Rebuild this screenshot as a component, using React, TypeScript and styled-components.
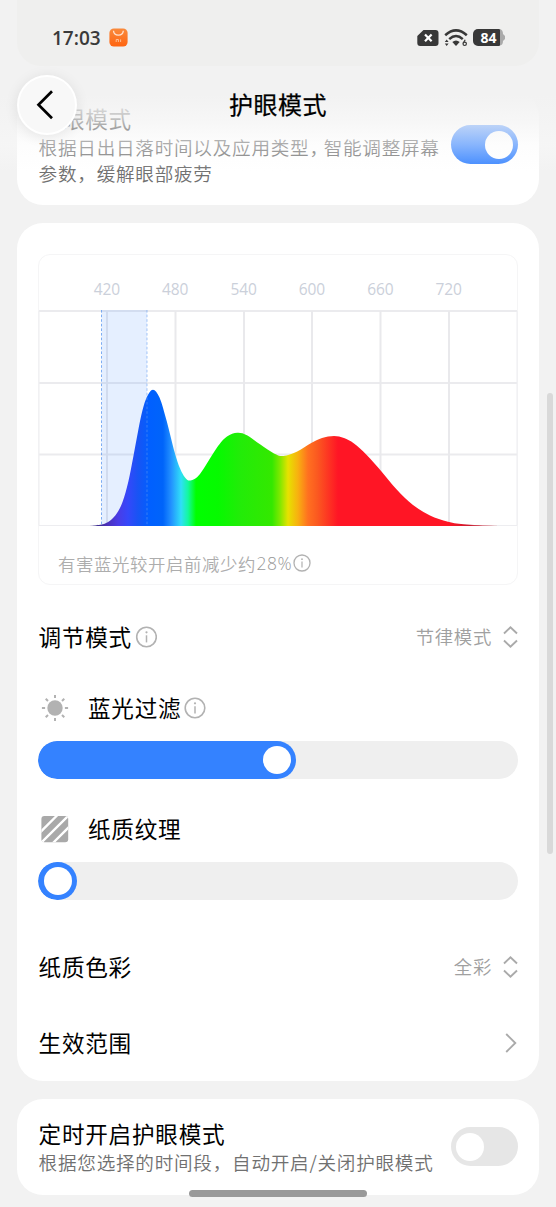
import React from 'react';
import styled, { createGlobalStyle } from 'styled-components';

const GlobalStyle = createGlobalStyle`
  * { box-sizing: border-box; }
  body {
    margin: 0;
    background: #f2f2f2;
    font-family: "Noto Sans CJK SC", "Noto Sans", sans-serif;
    color: #000;
    overflow: hidden;
  }
  svg { display: block; flex: none; }
`;

const Screen = styled.main`
  position: relative;
  width: 556px;
  height: 1207px;
  overflow: hidden;
  background: #f2f2f2;
  padding: 91px 17px 0;
  display: flex;
  flex-direction: column;
  gap: 18px;
`;

const Card = styled.section<{ $height: number }>`
  flex: none;
  height: ${(p) => p.$height}px;
  border-radius: 26px;
  background: #fff;
  padding: 0 21px;
`;

const SwitchCard = styled(Card)<{ $top: number }>`
  display: flex;
  justify-content: space-between;
  align-items: flex-start;
  padding-top: ${(p) => p.$top}px;
`;

const SwitchText = styled.div`
  display: flex;
  flex-direction: column;
  white-space: nowrap;
  padding-left: 0.6px;
`;

const Label = styled.span`
  font-size: 22.6px;
  line-height: 30px;
  letter-spacing: 0.75px;
  white-space: nowrap;
`;

const Hint = styled.span`
  font-size: 18.6px;
  line-height: 26px;
  letter-spacing: 0.75px;
  font-weight: 350;
  color: #707070;
`;

const TightComma = styled.span`
  letter-spacing: -4.4px;
`;

const Toggle = styled.div<{ $on?: boolean; $top: number }>`
  flex: none;
  width: 67.5px;
  height: 39px;
  margin-top: ${(p) => p.$top}px;
  padding: 0 5.5px;
  border-radius: 20px;
  display: flex;
  align-items: center;
  justify-content: ${(p) => (p.$on ? 'flex-end' : 'flex-start')};
  background: ${(p) => (p.$on ? '#3482ff' : '#e6e6e6')};
`;

const Knob = styled.div`
  flex: none;
  width: 28px;
  height: 28px;
  border-radius: 50%;
  background: #fff;
`;

const ChartCard = styled.div`
  height: 331px;
  margin: 31px 0 16px;
  border: 1px solid #f5f5f6;
  border-radius: 12px;
  display: flex;
  flex-direction: column;
`;

const ChartScale = styled.div`
  display: grid;
  grid-template-columns: repeat(6, 68.4px);
  padding-left: 33.6px;
  height: 55px;
  align-items: center;
  text-align: center;
  padding-top: 13px;
  font-family: "Open Sans", "Noto Sans", sans-serif;
  font-size: 15.5px;
  letter-spacing: -0.1px;
  color: #cbd0da;
`;

const Plot = styled.svg`
  margin-left: -1px;
`;

const ChartNote = styled.div`
  display: flex;
  align-items: center;
  height: 26px;
  margin: 22px 0 0 19px;
  font-size: 17.4px;
  letter-spacing: 0.6px;
  font-weight: 350;
  color: #adadad;
`;

const NoteValue = styled.span`
  font-family: "Open Sans", "Noto Sans", sans-serif;
  font-size: 17.5px;
  font-weight: 300;
  color: #999;
  letter-spacing: 0.5px;
  margin: 0 0.5px;
`;

const Row = styled.div<{ $height: number; $gap?: number }>`
  display: flex;
  align-items: center;
  height: ${(p) => p.$height}px;
  margin-top: ${(p) => p.$gap ?? 0}px;
  padding-left: 0.6px;
`;

const SliderHead = styled(Row)<{ $shift: number }>`
  padding-top: ${(p) => p.$shift}px;
`;

const HeadIcon = styled.div`
  width: 49.4px;
  padding-left: 2px;
  flex: none;
`;

const RowEnd = styled.div`
  margin-left: auto;
  display: flex;
  align-items: center;
  gap: 11px;
  font-size: 18.4px;
  letter-spacing: 0.7px;
  font-weight: 350;
  color: #a0a0a0;
`;

const RowValue = styled.span`
  margin-top: -2px;
`;

const Track = styled.div`
  height: 38px;
  border-radius: 19px;
  background: #efefef;
  overflow: hidden;
`;

const Fill = styled.div`
  height: 38px;
  border-radius: 19px;
  padding: 0 5px;
  background: #3482ff;
  display: flex;
  align-items: center;
  justify-content: flex-end;
`;

const TopFade = styled.div`
  position: absolute;
  inset: 0 0 auto 0;
  height: 175px;
  background: linear-gradient(
    rgba(242, 242, 242, 1) 95px,
    rgba(244, 244, 244, 0.78) 120px,
    rgba(250, 250, 250, 0.42) 145px,
    rgba(255, 255, 255, 0) 172px
  );
`;

const StatusBar = styled.header`
  position: absolute;
  top: 0;
  left: 17px;
  width: 522px;
  height: 66px;
  padding: 9px 33px 0 35px;
  border-radius: 0 0 24px 24px;
  background: #efefee;
  display: flex;
  align-items: center;
`;

const Clock = styled.span`
  font-family: "Open Sans", "Noto Sans", sans-serif;
  font-size: 19px;
  font-weight: 600;
  letter-spacing: 0;
  color: #3a3a3a;
  width: 57px;
`;

const StatusIcons = styled.div`
  margin-left: auto;
  display: flex;
  align-items: center;
  gap: 5px;
`;

const NavBar = styled.nav`
  position: absolute;
  top: 75px;
  left: 17px;
  right: 17px;
  height: 60px;
  display: grid;
  grid-template-columns: 60px 1fr 60px;
  align-items: center;
`;

const BackButton = styled.button`
  width: 60px;
  height: 60px;
  padding: 0;
  border: 2px solid #fff;
  border-radius: 50%;
  background: #f8f8f8;
  box-shadow: 0 2px 14px rgba(0, 0, 0, 0.09);
  display: flex;
  align-items: center;
  justify-content: center;
`;

const PageTitle = styled.h1`
  margin: -2px 0 0;
  text-align: center;
  font-size: 24px;
  font-weight: 400;
  letter-spacing: 0.5px;
  line-height: 36px;
  -webkit-text-stroke: 0.25px #000;
`;

const ScrollThumb = styled.div`
  position: absolute;
  left: 547px;
  top: 393px;
  width: 6px;
  height: 461px;
  border-radius: 3px;
  background: #d9d9d9;
`;

const HomeBar = styled.div`
  position: absolute;
  left: 189px;
  top: 1190px;
  width: 178px;
  height: 7px;
  border-radius: 4px;
  background: #999;
`;

const InfoIcon = ({ size, left = 0 }: { size: number; left?: number }) => (
  <svg width={size + left} height={size} viewBox={`${-left} 0 ${size + left} ${size}`} fill="none">
    <g transform={`scale(${size / 22})`}>
      <circle cx="11" cy="11" r="9.8" stroke="#b2b2b2" strokeWidth="1.6" />
      <circle cx="11" cy="6.3" r="1.1" fill="#b2b2b2" />
      <path d="M11 9.3V16.4" stroke="#b2b2b2" strokeWidth="1.5" />
    </g>
  </svg>
);

const UpDownIcon = () => (
  <svg width="15" height="24" viewBox="0 0 15 24" fill="none" stroke="#aaa" strokeWidth="1.9">
    <path d="M1 8.5L7.5 2.3L14 8.5M1 15.5L7.5 21.7L14 15.5" />
  </svg>
);

const ChevronIcon = () => (
  <svg width="15" height="22" viewBox="0 0 15 22" fill="none" stroke="#aaa" strokeWidth="1.9">
    <path d="M3.2 2L12.3 11L3.2 20" />
  </svg>
);

const SunIcon = () => (
  <svg width="28" height="28" viewBox="0 0 28 28">
    <circle cx="14" cy="14" r="7.7" fill="#b2b2b2" />
    {[0, 45, 90, 135, 180, 225, 270, 315].map((a) => (
      <path key={a} d="M14 .9V4.1" stroke="#b2b2b2" strokeWidth="2" transform={`rotate(${a} 14 14)`} />
    ))}
  </svg>
);

const PaperIcon = () => (
  <svg width="28" height="28" viewBox="0 0 28 28">
    <defs>
      <clipPath id="sheet"><rect x=".4" y="1" width="26.8" height="26.2" rx="3" /></clipPath>
    </defs>
    <g clipPath="url(#sheet)">
      <rect width="28" height="28" fill="#a9a9a9" />
      <path d="M-2 18.5L18.5-2M-2 30L30-2M10 30L30 10" stroke="#fff" strokeWidth="2.3" />
    </g>
  </svg>
);

const StoreIcon = () => (
  <svg width="19" height="19" viewBox="0 0 19 19">
    <defs>
      <linearGradient id="store" x2="0" y2="1">
        <stop stopColor="#f98a3c" />
        <stop offset="1" stopColor="#ff6410" />
      </linearGradient>
    </defs>
    <rect x=".4" y=".4" width="18.2" height="18.2" rx="4.5" fill="url(#store)" />
    <path d="M4.5 2.8C5 8.6 13.8 8.6 14.3 2.8" fill="none" stroke="#ffe3d0" strokeWidth="1.3" />
    <path d="M7.2 14V11.5H9.4V14M11.6 11.4V14" fill="none" stroke="#ffc7a0" strokeWidth=".9" />
  </svg>
);

const SimIcon = () => (
  <svg width="22" height="18" viewBox="0 0 22 18">
    <path d="M6.5 1H18.5Q21.5 1 21.5 4V14Q21.5 17 18.5 17H3.2Q.3 17 .3 14V7Z" fill="#383838" />
    <path d="M8 5.5L14.6 12.3M14.6 5.5L8 12.3" stroke="#fff" strokeWidth="2.2" />
  </svg>
);

const WifiIcon = () => (
  <svg width="24" height="18" viewBox="0 0 24 18" fill="none" stroke="#383838">
    <path d="M1.2 6.2Q12-3.4 22.8 6.2" strokeWidth="2.5" />
    <path d="M5.2 10.1Q12 4 18.8 10.1" strokeWidth="2.5" />
    <path d="M8.3 13.1Q12 10 15.7 13.1L12 17Z" fill="#383838" stroke="none" />
    <path d="M.8 13L2.7 10.4L4.6 13ZM.8 14.4L2.7 17L4.6 14.4Z" fill="#383838" stroke="none" />
    <circle cx="20.7" cy="14.8" r="1.7" strokeWidth="1.2" />
    <path d="M19.2 14.2L21.2 10.8" strokeWidth="1.2" />
  </svg>
);

const Battery = styled.div`
  position: relative;
  width: 27px;
  height: 16.5px;
  border-radius: 5px 1px 1px 5px;
  background: #383838;
  color: #fff;
  display: flex;
  align-items: center;
  justify-content: center;
  padding-left: 4px;
  font: 700 14px/16px "Open Sans", "Noto Sans", sans-serif;
  letter-spacing: 0;
  margin-right: 6px;
`;

const BatteryTip = styled.svg`
  position: absolute;
  left: 27px;
  top: 0;
`;

type Point = [number, number];

// Spectrum outline, in plot coordinates (baseline at y = 215.5).
const spectrum: Point[] = [
  [52, 215.5], [63.7, 214.5], [72, 210.7], [78.7, 203.5], [84.7, 191.5], [90.3, 171.7], [95.3, 146.7],
  [100.3, 120], [104.3, 101], [109, 86.8], [115, 79.7], [121.5, 87.5], [128.7, 111], [136.7, 142.5],
  [142, 158.3], [147, 167.4], [152.5, 170.5],
  [162, 164], [178.7, 138], [189, 126.5], [199.3, 122.7], [209, 125.2], [222, 134.3], [236, 143.5],
  [245.5, 146], [258.7, 141.7], [273.7, 132.8], [284, 128], [296, 126], [306, 128], [316, 133.5],
  [328.7, 145], [343.7, 161.7], [358.7, 179.6], [375, 195], [392, 205.5], [410, 211.7],
  [428.7, 214.5], [459, 215.5],
];

const smooth = (pts: Point[]) =>
  pts.slice(1).reduce((d, p, i) => {
    const a = pts[Math.max(i - 1, 0)];
    const b = pts[i];
    const n = pts[Math.min(i + 2, pts.length - 1)];
    return `${d}C${b[0] + (p[0] - a[0]) / 6} ${b[1] + (p[1] - a[1]) / 6} ${p[0] - (n[0] - b[0]) / 6} ${p[1] - (n[1] - b[1]) / 6} ${p[0]} ${p[1]}`;
  }, `M${pts[0][0]} ${pts[0][1]}`);

const stops: [number, string][] = [
  [52, '#d8d4e4'], [60, '#3a2a90'], [68, '#4a2fb4'], [80, '#4a3ce6'], [90, '#3548fa'], [100, '#1854f4'],
  [112, '#0060ff'], [125, '#0064fa'], [133, '#2290ff'], [143, '#30def8'], [150, '#14f8a0'], [158, '#00ff00'],
  [180, '#06fa00'], [202, '#22ec08'], [234, '#34e800'], [242, '#80e800'], [250, '#e6e200'], [260, '#f8b010'],
  [270, '#ff7020'], [279, '#fb5a20'], [300, '#ff1525'], [410, '#ff1525'], [432, '#c81c30'], [459, '#e8c8cc'],
];

const SpectrumPlot = () => (
  <Plot width="480" height="218" viewBox="0 0 480 218" fill="none">
    <defs>
      <linearGradient id="rainbow" gradientUnits="userSpaceOnUse" x1="0" x2="480" y1="0" y2="0">
        {stops.map(([x, color]) => <stop key={x} offset={x / 480} stopColor={color} />)}
      </linearGradient>
    </defs>
    <path d="M1 1H479M1 73H479M1 144.5H479" stroke="#ebebee" strokeWidth="2" />
    <path d="M69 1V215M137.5 1V215M206 1V215M274 1V215M342.5 1V215M411 1V215" stroke="#e9e9ec" strokeWidth="2" />
    <path d="M1 1V215.5H479V1" stroke="#ededf0" />
    <rect x="63.5" y="0" width="45.5" height="215" fill="#2f80ff" fillOpacity=".125" />
    <path d={`${smooth(spectrum)}V216H52Z`} fill="url(#rainbow)" />
    <path d="M63.5 0V215" stroke="#5f9af0" strokeOpacity=".8" strokeDasharray="2.6 2" />
    <path d="M109 0V215" stroke="#5f9af0" strokeOpacity=".55" strokeDasharray="2.6 2" />
  </Plot>
);

const SpectrumCard = () => (
  <ChartCard>
    <ChartScale>
      {[420, 480, 540, 600, 660, 720].map((n) => <span key={n}>{n}</span>)}
    </ChartScale>
    <SpectrumPlot />
    <ChartNote>
      有害蓝光较开启前减少约<NoteValue>28%</NoteValue>
      <InfoIcon size={18} />
    </ChartNote>
  </ChartCard>
);

const SettingsCard = styled(Card)`
  display: flow-root;
`;

export default function App() {
  return (
    <>
      <GlobalStyle />
      <Screen>
        <SwitchCard $height={114} $top={13}>
          <SwitchText>
            <Label>护眼模式</Label>
            <Hint>根据日出日落时间以及应用类型<TightComma>，</TightComma>智能调整屏幕</Hint>
            <Hint>参数，缓解眼部疲劳</Hint>
          </SwitchText>
          <Toggle $on $top={21}><Knob /></Toggle>
        </SwitchCard>

        <SettingsCard $height={858}>
          <SpectrumCard />
          <Row $height={72}>
            <Label>调节模式</Label>
            <InfoIcon size={22} left={3.5} />
            <RowEnd><RowValue>节律模式</RowValue><UpDownIcon /></RowEnd>
          </Row>
          <SliderHead $height={68} $shift={2}>
            <HeadIcon><SunIcon /></HeadIcon>
            <Label>蓝光过滤</Label>
            <InfoIcon size={22} left={3} />
          </SliderHead>
          <Track><Fill style={{ width: 258 }}><Knob /></Fill></Track>
          <SliderHead $height={83} $shift={16}>
            <HeadIcon><PaperIcon /></HeadIcon>
            <Label>纸质纹理</Label>
          </SliderHead>
          <Track><Fill style={{ width: 38.5 }}><Knob /></Fill></Track>
          <Row $height={76} $gap={29}>
            <Label>纸质色彩</Label>
            <RowEnd><RowValue>全彩</RowValue><UpDownIcon /></RowEnd>
          </Row>
          <Row $height={76}>
            <Label>生效范围</Label>
            <RowEnd><ChevronIcon /></RowEnd>
          </Row>
        </SettingsCard>

        <SwitchCard $height={96} $top={20}>
          <SwitchText>
            <Label>定时开启护眼模式</Label>
            <Hint>根据您选择的时间段，自动开启/关闭护眼模式</Hint>
          </SwitchText>
          <Toggle $top={8}><Knob /></Toggle>
        </SwitchCard>

        <TopFade />
        <StatusBar>
          <Clock>17:03</Clock>
          <StoreIcon />
          <StatusIcons>
            <SimIcon />
            <WifiIcon />
            <Battery>
              84
              <BatteryTip width="6" height="17" viewBox="0 0 6 17">
                <path d="M0 0Q3 1 3 5L5 7V10L3 12Q3 16 0 16.5Z" fill="#aaa" />
              </BatteryTip>
            </Battery>
          </StatusIcons>
        </StatusBar>
        <NavBar>
          <BackButton aria-label="返回">
            <svg width="30" height="34" viewBox="0 0 30 34" fill="none" stroke="#000" strokeWidth="2.7">
              <path d="M20 3.2L6.5 16.7L20 30.2" />
            </svg>
          </BackButton>
          <PageTitle>护眼模式</PageTitle>
        </NavBar>
        <ScrollThumb />
        <HomeBar />
      </Screen>
    </>
  );
}
